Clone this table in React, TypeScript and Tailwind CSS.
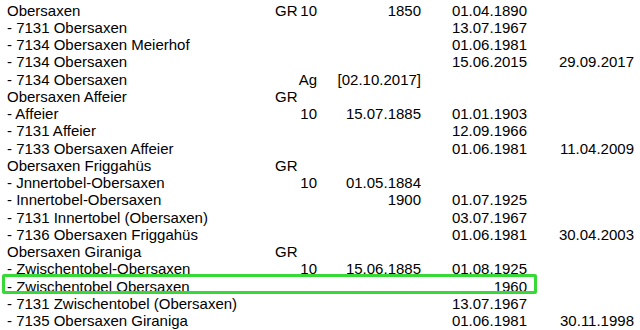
import React from "react";

type Row = [string, string, string, string, string, string];

const rows: Row[] = [
  ["Obersaxen", "GR", "10", "1850", "01.04.1890", ""],
  ["- 7131 Obersaxen", "", "", "", "13.07.1967", ""],
  ["- 7134 Obersaxen Meierhof", "", "", "", "01.06.1981", ""],
  ["- 7134 Obersaxen", "", "", "", "15.06.2015", "29.09.2017"],
  ["- 7134 Obersaxen", "", "Ag", "[02.10.2017]", "", ""],
  ["Obersaxen Affeier", "GR", "", "", "", ""],
  ["- Affeier", "", "10", "15.07.1885", "01.01.1903", ""],
  ["- 7131 Affeier", "", "", "", "12.09.1966", ""],
  ["- 7133 Obersaxen Affeier", "", "", "", "01.06.1981", "11.04.2009"],
  ["Obersaxen Friggahüs", "GR", "", "", "", ""],
  ["- Jnnertobel-Obersaxen", "", "10", "01.05.1884", "", ""],
  ["- Innertobel-Obersaxen", "", "", "1900", "01.07.1925", ""],
  ["- 7131 Innertobel (Obersaxen)", "", "", "", "03.07.1967", ""],
  ["- 7136 Obersaxen Friggahüs", "", "", "", "01.06.1981", "30.04.2003"],
  ["Obersaxen Giraniga", "GR", "", "", "", ""],
  ["- Zwischentobel-Obersaxen", "", "10", "15.06.1885", "01.08.1925", ""],
  ["- Zwischentobel Obersaxen", "", "", "", "1960", ""],
  ["- 7131 Zwischentobel (Obersaxen)", "", "", "", "13.07.1967", ""],
  ["- 7135 Obersaxen Giraniga", "", "", "", "01.06.1981", "30.11.1998"],
];

export default function App() {
  return (
    <div
      className="w-[640px] h-[330px] overflow-hidden bg-white text-black pt-[1.5px] pl-[7px] text-[15px] leading-[17.25px]"
      style={{ fontFamily: '"Liberation Sans", Arial, sans-serif' }}
    >
      {rows.map((r, i) => (
        <div
          key={i}
          className="relative grid grid-cols-[268px_42px_104px_106px_107px] whitespace-nowrap"
        >
          <div>{r[0]}</div>
          <div className="flex justify-between">
            <span>{r[1]}</span>
            <span>{r[2]}</span>
          </div>
          <div className="text-right">{r[3]}</div>
          <div className="text-right">{r[4]}</div>
          <div className="text-right">{r[5]}</div>
          {i === 16 && (
            <div className="absolute left-[-5px] top-[-3.5px] w-[535px] h-[20px] border-[3px] border-[#36d936] rounded-[2px] pointer-events-none" />
          )}
        </div>
      ))}
    </div>
  );
}
